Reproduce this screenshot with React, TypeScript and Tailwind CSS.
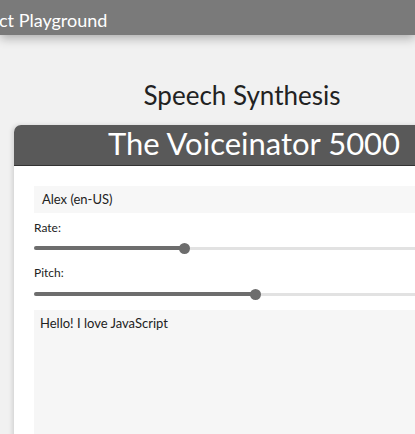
import React from 'react';

const font = { fontFamily: 'Lato, "Noto Sans", sans-serif' };

// Simple slider drawn with divs so the thumb lands exactly
const Slider = ({ pos }: { pos: number }) => (
  <div className="relative h-[12px] w-[442px] flex items-center">
    <div className="h-[3px] w-full rounded-full bg-[#e2e2e2]" />
    <div className="absolute left-0 h-[4px] rounded-full bg-[#6d6d6d]" style={{ width: pos }} />
    <div className="absolute h-[11px] w-[11px] rounded-full bg-[#6d6d6d]" style={{ left: pos - 5 }} />
  </div>
);

export default function App() {
  return (
    <div className="w-[415px] h-[434px] overflow-hidden bg-[#f1f1f1]" style={font}>
      <header className="h-[35px] bg-[#7a7a7a] flex items-center pt-[5px] shadow-[0_3px_10px_rgba(0,0,0,0.3)] relative z-10">
        <span className="text-white text-[18px] -ml-[1px]">ct Playground</span>
      </header>

      <main className="pl-[14px] w-[494px]">
        <h2 className="pr-[24px] text-center text-[26px] text-[#222] pt-[42px] h-[90px] leading-[36px]">
          Speech Synthesis
        </h2>

        <div className="w-[480px] rounded-t-[7px] bg-white shadow-[-2px_0_4px_rgba(0,0,0,0.12)] overflow-hidden">
          <div className="h-[41px] bg-[#595959] border-b border-[#333] flex items-center justify-center">
            <span className="text-white text-[31px] leading-none -mt-[3px]">The Voiceinator 5000</span>
          </div>

          <div className="pl-[20px] pt-[20px] pb-[40px]">
            <div className="w-[442px] h-[27px] bg-[#f7f7f7] flex items-center pl-[8px] text-[13px] text-[#222]">
              Alex (en-US)
            </div>
            <div className="text-[12px] text-[#222] mt-[6px] leading-[18px]">Rate:</div>
            <div className="mt-[5px]">
              <Slider pos={150} />
            </div>
            <div className="text-[12px] text-[#222] mt-[10px] leading-[18px]">Pitch:</div>
            <div className="mt-[6px]">
              <Slider pos={221} />
            </div>
            <div className="mt-[10px] w-[442px] h-[140px] bg-[#f6f6f6] pl-[6px] pt-[4px] text-[13px] text-[#222]">
              Hello! I love JavaScript
            </div>
          </div>
        </div>
      </main>
    </div>
  );
}
